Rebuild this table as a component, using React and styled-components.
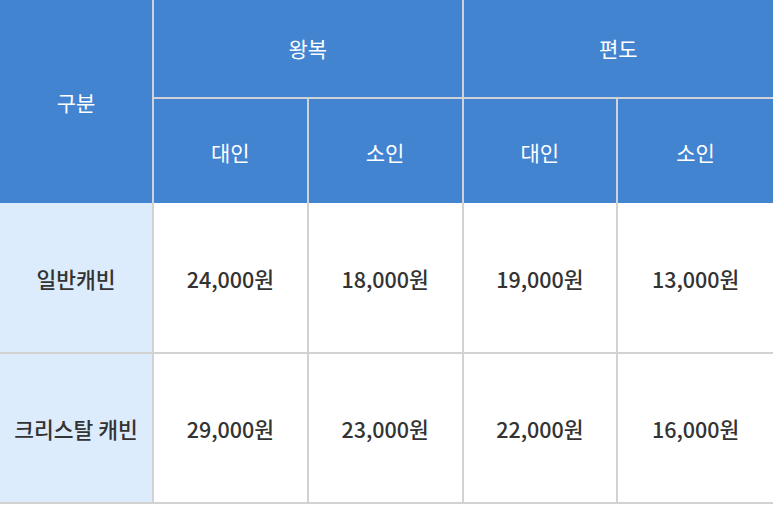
import styled, { createGlobalStyle } from 'styled-components';

const GlobalStyle = createGlobalStyle`
  html, body {
    margin: 0;
    padding: 0;
    background: #fff;
  }
  body {
    font-family: "Noto Sans CJK KR", "Noto Sans", sans-serif;
  }
`;

const rows = [
  { name: '일반캐빈', prices: ['24,000원', '18,000원', '19,000원', '13,000원'] },
  { name: '크리스탈 캐빈', prices: ['29,000원', '23,000원', '22,000원', '16,000원'] },
];

const App = () => {
  return (
    <>
      <GlobalStyle />
      <FareGrid>
        <HeadCell $rowSpan={2} $border>
          구분
        </HeadCell>
        <HeadCell $colSpan={2} $border $bottom>
          왕복
        </HeadCell>
        <HeadCell $colSpan={2} $bottom>
          편도
        </HeadCell>
        <HeadCell $border>대인</HeadCell>
        <HeadCell $border>소인</HeadCell>
        <HeadCell $border>대인</HeadCell>
        <HeadCell>소인</HeadCell>
        {rows.map((row) => (
          <Row key={row.name}>
            <LabelCell>{row.name}</LabelCell>
            {row.prices.map((price, i) => (
              <PriceCell key={i} $last={i === row.prices.length - 1}>
                {price}
              </PriceCell>
            ))}
          </Row>
        ))}
      </FareGrid>
    </>
  );
};

const FareGrid = styled.div`
  display: grid;
  grid-template-columns: 154px repeat(4, 1fr);
  grid-template-rows: 99px 104px 151px 150px;
  width: 773px;
`;

const Row = styled.div`
  display: contents;
`;

const Cell = styled.div`
  box-sizing: border-box;
  display: flex;
  align-items: center;
  justify-content: center;
  line-height: 1;
  white-space: nowrap;
`;

const HeadCell = styled(Cell)`
  background: #4384d1;
  color: #fff;
  font-size: 21px;
  font-weight: 400;
  grid-row: ${({ $rowSpan }) => ($rowSpan ? `span ${$rowSpan}` : 'auto')};
  grid-column: ${({ $colSpan }) => ($colSpan ? `span ${$colSpan}` : 'auto')};
  border-right: ${({ $border }) => ($border ? '2px solid #cfd3d9' : 'none')};
  border-bottom: ${({ $bottom }) => ($bottom ? '2px solid #cfd3d9' : 'none')};
  padding-top: ${({ $bottom }) => ($bottom ? '0' : '2px')};
`;

const BodyCell = styled(Cell)`
  color: #333;
  font-size: 21.5px;
  font-weight: 500;
  padding-top: 2px;
  border-bottom: 2px solid #d2d2d2;
`;

const LabelCell = styled(BodyCell)`
  background: #dcecfd;
  border-right: 2px solid #d2d2d2;
`;

const PriceCell = styled(BodyCell)`
  background: #fff;
  border-right: ${({ $last }) => ($last ? 'none' : '2px solid #d2d2d2')};
`;

export default App;
